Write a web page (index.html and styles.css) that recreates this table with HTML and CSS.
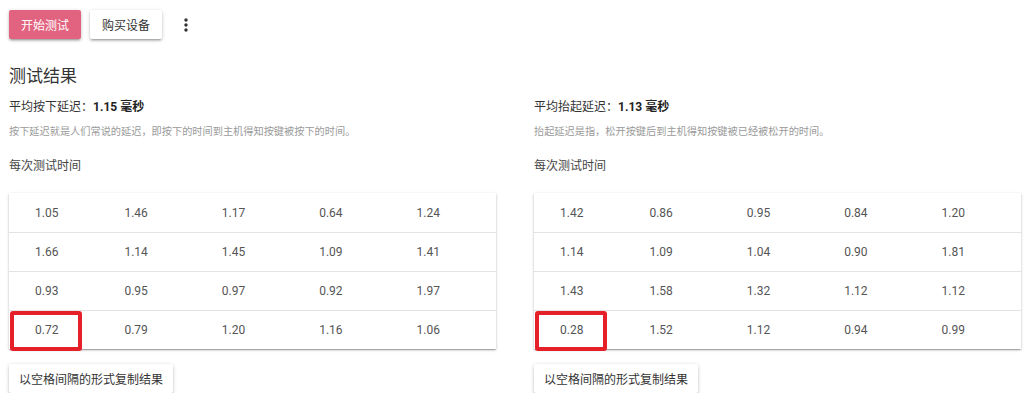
FILE: index.html
```html
<!DOCTYPE html>
<html lang="zh">
<head>
<meta charset="utf-8">
<link rel="stylesheet" href="styles.css">
</head>
<body>
<div class="page">
  <div class="toolbar">
    <button class="btn btn-primary">开始测试</button>
    <button class="btn">购买设备</button>
    <span class="kebab">
      <svg width="20" height="20" viewBox="0 0 24 24"><path fill="#333" d="M12 8c1.1 0 2-.9 2-2s-.9-2-2-2-2 .9-2 2 .9 2 2 2zm0 2c-1.1 0-2 .9-2 2s.9 2 2 2 2-.9 2-2-.9-2-2-2zm0 6c-1.1 0-2 .9-2 2s.9 2 2 2 2-.9 2-2-.9-2-2-2z"/></svg>
    </span>
  </div>
  <h2 class="title">测试结果</h2>
  <div class="results">
    <section class="col">
      <div class="stat">平均按下延迟：<b>1.15 毫秒</b></div>
      <div class="desc">按下延迟就是人们常说的延迟，即按下的时间到主机得知按键被按下的时间。</div>
      <div class="label">每次测试时间</div>
      <div class="table">
        <div class="row"><span>1.05</span><span>1.46</span><span>1.17</span><span>0.64</span><span>1.24</span></div>
        <div class="row"><span>1.66</span><span>1.14</span><span>1.45</span><span>1.09</span><span>1.41</span></div>
        <div class="row"><span>0.93</span><span>0.95</span><span>0.97</span><span>0.92</span><span>1.97</span></div>
        <div class="row"><span class="mark">0.72</span><span>0.79</span><span>1.20</span><span>1.16</span><span>1.06</span></div>
      </div>
      <button class="btn btn-copy">以空格间隔的形式复制结果</button>
    </section>
    <section class="col">
      <div class="stat">平均抬起延迟：<b>1.13 毫秒</b></div>
      <div class="desc">抬起延迟是指，松开按键后到主机得知按键被已经被松开的时间。</div>
      <div class="label">每次测试时间</div>
      <div class="table">
        <div class="row"><span>1.42</span><span>0.86</span><span>0.95</span><span>0.84</span><span>1.20</span></div>
        <div class="row"><span>1.14</span><span>1.09</span><span>1.04</span><span>0.90</span><span>1.81</span></div>
        <div class="row"><span>1.43</span><span>1.58</span><span>1.32</span><span>1.12</span><span>1.12</span></div>
        <div class="row"><span class="mark">0.28</span><span>1.52</span><span>1.12</span><span>0.94</span><span>0.99</span></div>
      </div>
      <button class="btn btn-copy">以空格间隔的形式复制结果</button>
    </section>
  </div>
</div>
</body>
</html>
```

FILE: styles.css
```css
*, *::before, *::after { box-sizing: border-box; }
html, body { margin: 0; padding: 0; background: #fff; }
body {
  font-family: Roboto, "Noto Sans CJK SC", sans-serif;
  color: #333;
}
.page { padding: 10px 9px 0 9px; }

.toolbar {
  display: flex;
  align-items: center;
  gap: 9px;
  height: 29px;
}
.btn {
  font-family: Roboto, "Noto Sans CJK SC", sans-serif;
  font-size: 12px;
  height: 29px;
  padding: 0 13px;
  border: none;
  border-radius: 2px;
  background: #fff;
  color: #333;
  white-space: nowrap;
  box-shadow: 0 2px 2px 0 rgba(0,0,0,.14), 0 3px 1px -2px rgba(0,0,0,.12), 0 1px 4px 0 rgba(0,0,0,.18);
  cursor: pointer;
}
.toolbar .btn { width: 72px; padding: 0; }
.btn-primary { background: #e2637f; color: #fff; }
.kebab { display: flex; margin-left: 5px; }

.title {
  margin: 25px 0 0 0;
  font-size: 17px;
  line-height: 24px;
  font-weight: 400;
  color: #333;
}

.results {
  display: grid;
  grid-template-columns: 487px 487px;
  column-gap: 38px;
}
.col { display: flex; flex-direction: column; align-items: flex-start; }

.stat {
  margin-top: 9px;
  font-size: 12px;
  line-height: 20px;
  color: #333;
}
.stat b { font-weight: 700; color: #222; }
.desc {
  margin-top: 7px;
  font-size: 10.2px;
  line-height: 16px;
  color: #9a9a9a;
}
.label {
  margin-top: 16px;
  font-size: 12px;
  line-height: 20px;
  color: #444;
}

.table {
  margin-top: 17px;
  width: 487px;
  background: #fff;
  box-shadow: 0 1px 3px rgba(0,0,0,.2), 0 1px 1px rgba(0,0,0,.14), 0 2px 1px -1px rgba(0,0,0,.12);
}
.row {
  display: grid;
  grid-template-columns: repeat(5, 1fr);
  height: 39px;
  border-top: 1px solid #e3e3e3;
}
.row:first-child { border-top: none; }
.row span {
  position: relative;
  display: flex;
  align-items: center;
  padding-left: 18px;
  font-size: 12px;
  color: #555;
}
.row span:first-child { padding-left: 26px; }
.mark::after {
  content: "";
  position: absolute;
  left: 1px;
  top: 0;
  width: 72px;
  height: 40px;
  border: 4px solid #e52028;
  border-radius: 3px;
}

.btn-copy {
  margin-top: 15px;
  padding: 0 10px;
}
```
